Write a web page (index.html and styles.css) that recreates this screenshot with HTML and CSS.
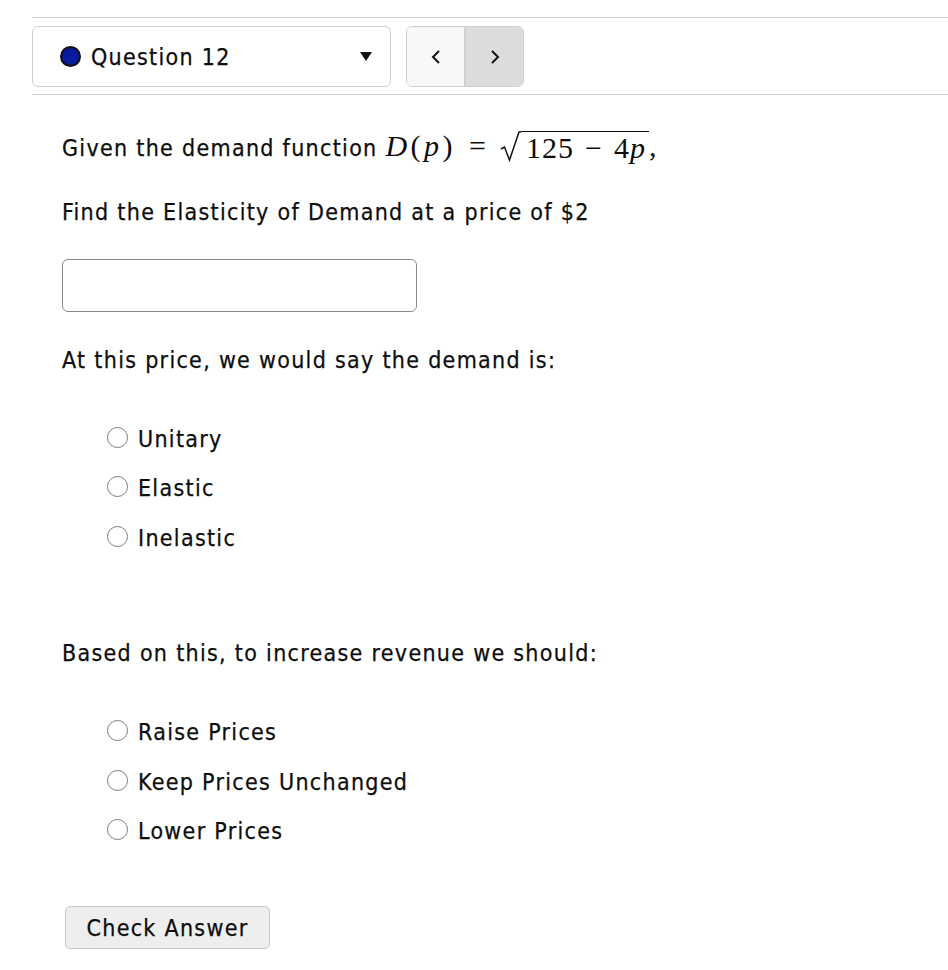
FILE: index.html
```html
<!DOCTYPE html>
<html>
<head>
<meta charset="utf-8">
<link rel="stylesheet" href="styles.css">
</head>
<body>
<div class="topbar">
  <div class="selector">
    <span class="dot"></span>
    <span class="qlabel">Question 12</span>
    <span class="caret"></span>
  </div>
  <div class="pager">
    <button class="pg prev" aria-label="Previous"><svg width="12" height="16" viewBox="0 0 12 16"><path d="M9 2 L3 8 L9 14" fill="none" stroke="#111" stroke-width="2"/></svg></button>
    <button class="pg next" aria-label="Next"><svg width="12" height="16" viewBox="0 0 12 16"><path d="M3 2 L9 8 L3 14" fill="none" stroke="#111" stroke-width="2"/></svg></button>
  </div>
</div>
<div class="content">
  <p class="line first">Given the demand function <span class="math"><span class="fn"><i>D</i>(<i>p</i>)</span><span class="eq">=</span><span class="sqrt"><svg class="rad" width="21" height="32" viewBox="0 0 21 32"><path d="M1 18 L4.5 16 L9.5 29 L19 1 L21 1" fill="none" stroke="#111" stroke-width="1.5"/></svg><span class="radicand">125<span class="minus">−</span>4<i>p</i></span></span>,</span></p>
  <p class="line">Find the Elasticity of Demand at a price of $2</p>
  <input class="answer" type="text">
  <p class="line">At this price, we would say the demand is:</p>
  <ul class="choices first-set">
    <li><span class="radio"></span>Unitary</li>
    <li><span class="radio"></span>Elastic</li>
    <li><span class="radio"></span>Inelastic</li>
  </ul>
  <p class="line based">Based on this, to increase revenue we should:</p>
  <ul class="choices second-set">
    <li><span class="radio"></span>Raise Prices</li>
    <li><span class="radio"></span>Keep Prices Unchanged</li>
    <li><span class="radio"></span>Lower Prices</li>
  </ul>
  <button class="check">Check Answer</button>
</div>
</body>
</html>
```
FILE: styles.css
```css
* { box-sizing: border-box; }
body {
  margin: 0;
  padding-top: 17px;
  font-family: "DejaVu Sans Condensed", "DejaVu Sans", sans-serif;
  font-size: 23px;
  letter-spacing: 1.3px;
  color: #0d0d0d;
  -webkit-text-stroke: 0.25px #0d0d0d;
  background: #fff;
}
.topbar {
  margin-left: 32px;
  border-top: 1px solid #d0d0d0;
  border-bottom: 1px solid #d0d0d0;
  padding: 8px 0 7px;
  display: flex;
  gap: 15px;
}
.selector {
  width: 359px;
  height: 61px;
  border: 1px solid #cfcfcf;
  border-radius: 6px;
  display: flex;
  align-items: center;
  padding-left: 27px;
  padding-right: 18px;
}
.dot {
  width: 21px;
  height: 21px;
  border-radius: 50%;
  background: #0a1a9e;
  border: 2px solid #111;
  margin-right: 10px;
  flex: none;
}
.qlabel { flex: 1; }
.caret {
  width: 0; height: 0;
  border-left: 6px solid transparent;
  border-right: 6px solid transparent;
  border-top: 9px solid #111;
}
.pager {
  display: flex;
  width: 118px;
  height: 61px;
  border: 1px solid #cfcfcf;
  border-radius: 6px;
  overflow: hidden;
}
.pg {
  border: 0;
  margin: 0;
  padding: 0;
  display: flex;
  align-items: center;
  justify-content: center;
  height: 100%;
}
.prev { width: 59px; background: #f8f8f8; border-right: 2px solid #d0d0d0; }
.next { flex: 1; background: #dcdcdc; }
.content { padding-left: 62px; }
.line {
  margin: 0;
  line-height: 30px;
}
.first { margin-top: 36px; }
.content .line + .line { margin-top: 34px; }
.math {
  font-family: "Liberation Serif", "Times New Roman", serif;
  font-size: 30px;
  letter-spacing: 0;
  -webkit-text-stroke: 0;
}
.fn { letter-spacing: 3.5px; }
.eq { margin: 0 14px 0 13px; }
.sqrt { display: inline-flex; align-items: flex-end; vertical-align: -7px; }
.rad { display: block; }
.radicand {
  border-top: 1.5px solid #111;
  padding: 1px 3px 0 5px;
  line-height: 30px;
  letter-spacing: 1px;
}
.minus { margin: 0 11px; }
.answer {
  display: block;
  margin: 32px 0 33px;
  width: 355px;
  height: 53px;
  border: 1px solid #8a8a8a;
  border-radius: 6px;
  background: #fff;
}
.choices {
  list-style: none;
  margin: 0;
  padding: 0 0 0 45px;
}
.first-set { margin-top: 39px; }
.second-set { margin-top: 40px; }
.choices li {
  height: 49.5px;
  display: flex;
  align-items: center;
}
.radio {
  width: 21px;
  height: 21px;
  border: 1.5px solid #7a7a7a;
  border-radius: 50%;
  margin-right: 10px;
  margin-top: -3px;
  flex: none;
  background: #fff;
}
.based { margin-top: 75px; }
.check {
  display: block;
  margin: 50px 0 0 3px;
  width: 205px;
  height: 43px;
  background: #eeeeee;
  border: 1px solid #c8c8c8;
  border-radius: 5px;
  font-family: "DejaVu Sans Condensed", "DejaVu Sans", sans-serif;
  font-size: 23px;
  letter-spacing: 1.3px;
  color: #0d0d0d;
  -webkit-text-stroke: 0.25px #0d0d0d;
  padding: 0;
}
```
